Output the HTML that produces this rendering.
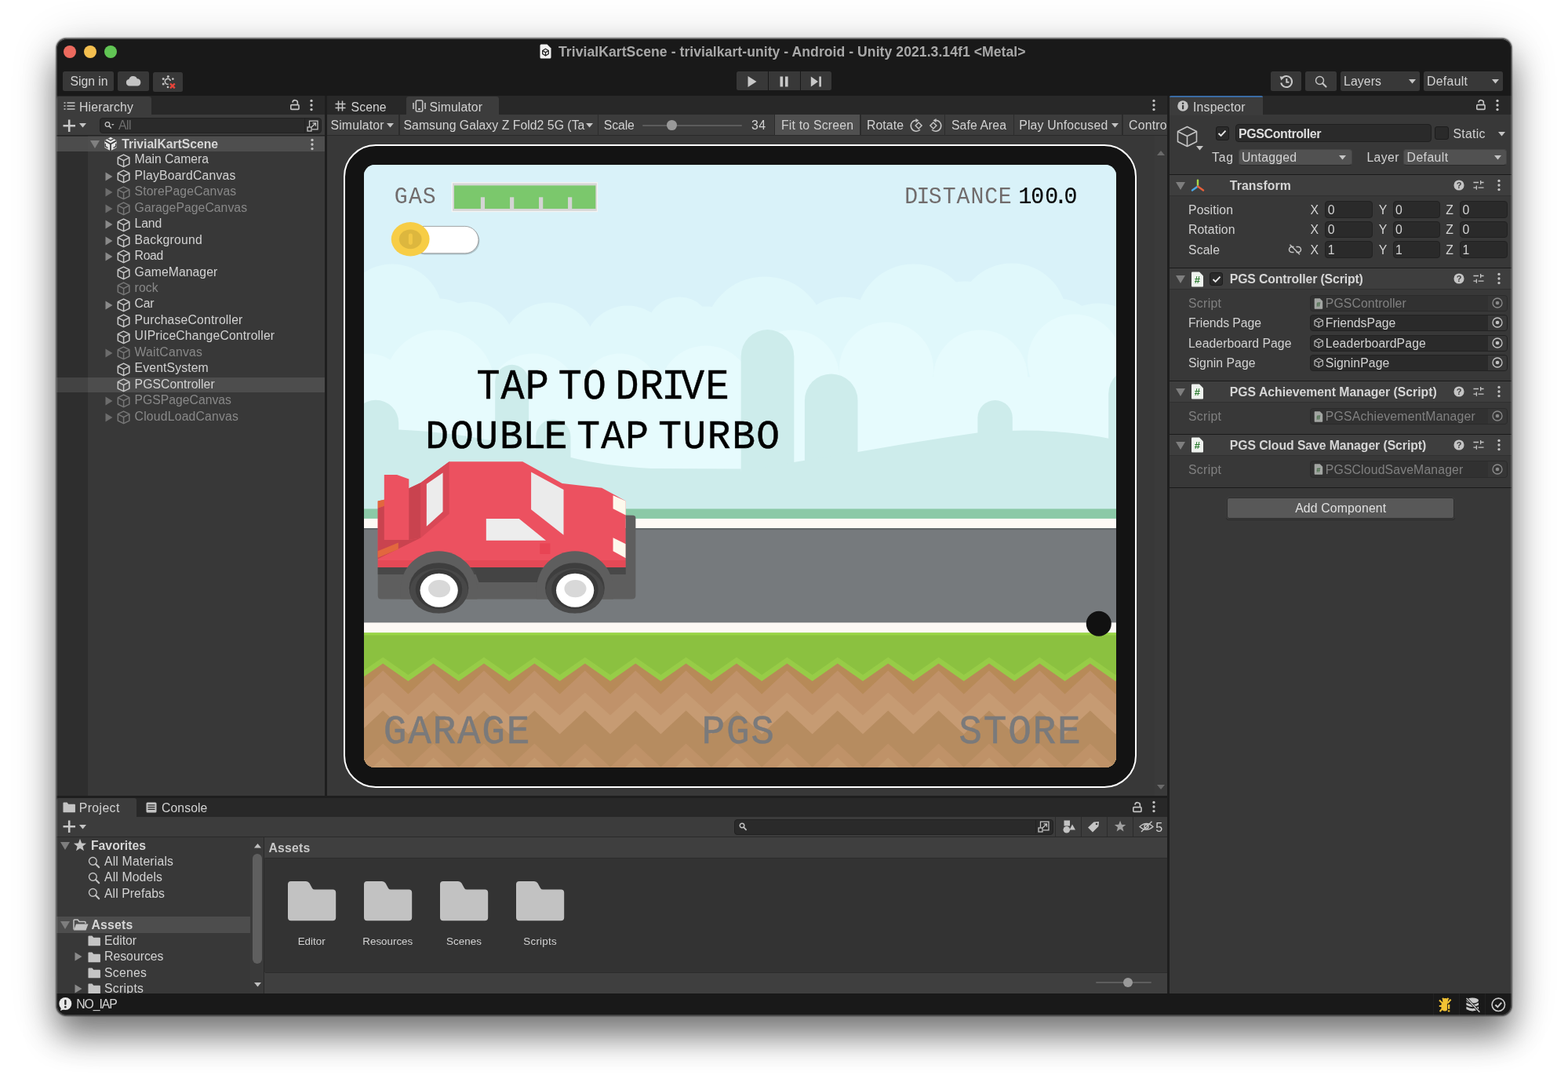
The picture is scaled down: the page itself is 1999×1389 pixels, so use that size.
<!DOCTYPE html>
<html><head><meta charset="utf-8"><title>Unity</title>
<style>
html,body{margin:0;padding:0}
body{width:1999px;height:1389px;background:#fff;position:relative;overflow:hidden;font-family:"Liberation Sans",sans-serif}
#sh{position:absolute;left:71.6px;top:48.8px;width:1855.8px;height:1245px;border-radius:13px;box-shadow:0 0 1.5px 0.4px rgba(0,0,0,.55),0 27px 42px rgba(0,0,0,.46),0 8px 60px rgba(0,0,0,.2)}
#w{will-change:transform;position:absolute;left:72px;top:49px;width:1855.4px;height:1244.8px;overflow:hidden;border-radius:13px;background:#383838}
#w div,#w svg,#w span{position:absolute}
#w svg{overflow:visible}
.t{white-space:nowrap;line-height:20px}
</style></head><body>
<div id="sh"></div>
<div id="w">
<div style="left:0px;top:0px;width:1855.6px;height:73.2px;background:#191919;"></div>
<div style="left:9.4px;top:9.4px;width:16px;height:16px;background:#ec6a5e;border-radius:50%;"></div>
<div style="left:35px;top:9.4px;width:16px;height:16px;background:#f4bf4f;border-radius:50%;"></div>
<div style="left:60.6px;top:9.4px;width:16px;height:16px;background:#61c554;border-radius:50%;"></div>
<svg style="left:616px;top:6.6px;" width="15" height="19" viewBox="0 0 15 19"><path d="M0.5 2 Q0.5 0.5 2 0.5 H9.5 L14.5 5.5 V17 Q14.5 18.5 13 18.5 H2 Q0.5 18.5 0.5 17 Z" fill="#f2f2f2"/><g fill="none" stroke="#222" stroke-width="1.3"><path d="M7.5 6.3 L11.3 8.5 V12.7 L7.5 14.9 L3.7 12.7 V8.5 Z"/><path d="M3.9 8.6 L7.5 10.7 L11.1 8.6 M7.5 10.7 V14.7"/></g></svg>
<span class="t" style="left:640px;top:7px;font-size:17.6px;color:#a8a8a8;letter-spacing:0.05px;font-weight:bold;">TrivialKartScene - trivialkart-unity - Android - Unity 2021.3.14f1 &lt;Metal&gt;</span>
<div style="left:8.4px;top:42.4px;width:64.6px;height:24.2px;background:#383838;border-radius:2.5px;"></div>
<span class="t" style="left:17.5px;top:45px;font-size:15.8px;color:#d2d2d2;letter-spacing:-0.05px;">Sign in</span>
<div style="left:78px;top:42.4px;width:39.6px;height:24.2px;background:#383838;border-radius:2.5px;"></div>
<svg style="left:88px;top:46.5px;" width="20" height="14" viewBox="0 0 20 14"><path d="M5 13.5 A4.3 4.3 0 0 1 4.3 5 A5.6 5.6 0 0 1 14.8 4.2 A4.7 4.7 0 0 1 15.6 13.5 Z" fill="#c4c4c4"/></svg>
<div style="left:122.8px;top:43.4px;width:38.2px;height:24.2px;background:#383838;border-radius:2.5px;"></div>
<svg style="left:132.5px;top:46px;" width="21" height="20" viewBox="0 0 21 20"><g fill="#c4c4c4"><circle cx="9.3" cy="2.6" r="1.5"/><circle cx="3.2" cy="5.6" r="1.5"/><circle cx="15.4" cy="5.6" r="1.3"/><circle cx="3.2" cy="12" r="1.5"/><circle cx="9" cy="16" r="1.3"/></g><path d="M12.4 8 A3.6 3.6 0 1 0 9.6 12.4" fill="none" stroke="#c4c4c4" stroke-width="1.6"/><path d="M12 11.5 L17.8 17.3 M17.8 11.5 L12 17.3" stroke="#e8443a" stroke-width="2.4"/></svg>
<div style="left:867.4px;top:42.4px;width:120.2px;height:24px;background:#383838;border-radius:2.5px;"></div>
<div style="left:907.2px;top:42.4px;width:1px;height:24px;background:#191919;"></div>
<div style="left:948.2px;top:42.4px;width:1px;height:24px;background:#191919;"></div>
<svg style="left:880px;top:46.5px;" width="14" height="16" viewBox="0 0 14 16"><path d="M1.5 1 L12.5 8 L1.5 15 Z" fill="#c8c8c8"/></svg>
<svg style="left:922px;top:47.5px;" width="12" height="14" viewBox="0 0 12 14"><rect x="0.5" y="0.5" width="3.6" height="13" fill="#c8c8c8"/><rect x="7" y="0.5" width="3.6" height="13" fill="#c8c8c8"/></svg>
<svg style="left:961px;top:47.5px;" width="15" height="14" viewBox="0 0 15 14"><path d="M0.8 0.5 L10 7 L0.8 13.5 Z" fill="#c8c8c8"/><rect x="11.3" y="0.5" width="2.6" height="13" fill="#c8c8c8"/></svg>
<div style="left:1547.6px;top:42.4px;width:39.4px;height:24.2px;background:#383838;border-radius:2.5px;"></div>
<svg style="left:1558.5px;top:45.5px;" width="18" height="18" viewBox="0 0 18 18"><g fill="none" stroke="#c8c8c8" stroke-width="2"><path d="M3.2 5.2 A7 7 0 1 1 2.2 10.5"/><path d="M9.3 5 V9.8 H12.4"/></g><path d="M0.6 2.2 L6.2 3 L2.3 7.6 Z" fill="#c4c4c4"/></svg>
<div style="left:1592px;top:42.4px;width:40px;height:24.2px;background:#383838;border-radius:2.5px;"></div>
<svg style="left:1604px;top:46.5px;" width="16" height="16" viewBox="0 0 16 16"><circle cx="6.5" cy="6.5" r="5" fill="none" stroke="#c4c4c4" stroke-width="1.4"/><path d="M10.2 10.2 L14.5 14.5" stroke="#c4c4c4" stroke-width="2.2" stroke-linecap="round"/></svg>
<div style="left:1637px;top:42.4px;width:101px;height:24.2px;background:#383838;border-radius:2.5px;"></div>
<span class="t" style="left:1641px;top:45px;font-size:15.8px;color:#d2d2d2;letter-spacing:0.12px;">Layers</span>
<svg style="left:1724px;top:52.05px;" width="9" height="5.5" viewBox="0 0 9 5.5"><path d="M0 0 H9 L4.5 5.5 Z" fill="#c4c4c4"/></svg>
<div style="left:1743px;top:42.4px;width:101px;height:24.2px;background:#383838;border-radius:2.5px;"></div>
<span class="t" style="left:1747px;top:45px;font-size:15.8px;color:#d2d2d2;letter-spacing:0.32px;">Default</span>
<svg style="left:1830.1px;top:52.05px;" width="9" height="5.5" viewBox="0 0 9 5.5"><path d="M0 0 H9 L4.5 5.5 Z" fill="#c4c4c4"/></svg>
<div style="left:0px;top:73.2px;width:341.6px;height:892.2px;background:#383838;"></div>
<div style="left:0px;top:73.2px;width:341.6px;height:24px;background:#282828;"></div>
<div style="left:0px;top:74px;width:120.8px;height:23.6px;background:#3c3c3c;border-radius:3px 3px 0 0;"></div>
<svg style="left:8.6px;top:80.2px;" width="14" height="11.4" viewBox="0 0 14 11.4"><g stroke="#c4c4c4" stroke-width="1.5"><path d="M4.5 2 H14.5 M4.5 6 H14.5 M4.5 10 H14.5"/><path d="M0.5 2 H2.5 M0.5 6 H2.5 M0.5 10 H2.5"/></g></svg>
<span class="t" style="left:29px;top:78px;font-size:15.8px;color:#d2d2d2;letter-spacing:0.17px;">Hierarchy</span>
<svg style="left:297.7px;top:78.3px;" width="12" height="13" viewBox="0 0 12 13"><g fill="none" stroke="#c4c4c4" stroke-width="1.6"><rect x="0.8" y="6.6" width="10.2" height="5.8" rx="1"/><path d="M9.4 6.6 V4.2 A3.2 3.2 0 0 0 3 3.6"/></g></svg>
<svg style="left:323.3px;top:77px;" width="4" height="16" viewBox="0 0 4 16"><circle cx="2" cy="2.4" r="1.65" fill="#c4c4c4"/><circle cx="2" cy="8" r="1.65" fill="#c4c4c4"/><circle cx="2" cy="13.6" r="1.65" fill="#c4c4c4"/></svg>
<div style="left:0px;top:97.2px;width:341.6px;height:27px;background:#3c3c3c;"></div>
<div style="left:0px;top:123.4px;width:341.6px;height:1px;background:#232323;"></div>
<svg style="left:7.6px;top:102.5px;" width="17" height="17" viewBox="0 0 17 17"><path d="M8.2 0.5 V16 M0.5 8.2 H16" stroke="#c8c8c8" stroke-width="2.6" fill="none"/></svg>
<svg style="left:29.3px;top:108.25px;" width="9" height="5.5" viewBox="0 0 9 5.5"><path d="M0 0 H9 L4.5 5.5 Z" fill="#c4c4c4"/></svg>
<div style="left:55px;top:100.6px;width:282.6px;height:20.2px;background:#2a2a2a;border:1px solid #212121;border-radius:4px;box-sizing:border-box;"></div>
<svg style="left:60.5px;top:105px;" width="13" height="12" viewBox="0 0 13 12"><circle cx="4" cy="4.5" r="2.8" fill="none" stroke="#c4c4c4" stroke-width="1.3"/><path d="M6 6.6 L8.8 9.6" stroke="#c4c4c4" stroke-width="1.5"/><path d="M9 4 H12.6 L10.8 6 Z" fill="#c4c4c4"/></svg>
<span class="t" style="left:79px;top:101px;font-size:15.8px;color:#6e6e6e;letter-spacing:-0.53px;">All</span>
<div style="left:316px;top:101.6px;width:1px;height:18.2px;background:#212121;"></div>
<svg style="left:319px;top:103px;" width="16" height="16" viewBox="0 0 16 16"><g fill="none" stroke="#c4c4c4" stroke-width="1.3"><path d="M3.5 9.5 V2.2 H14 V12.8 H6.8"/><rect x="1" y="10" width="5" height="5"/><path d="M6.2 10 L11.4 4.8 M7.5 4.8 H11.4 V8.7"/></g></svg>
<div style="left:0px;top:124.4px;width:40.4px;height:841px;background:#2e2e2e;"></div>
<div style="left:0px;top:124.6px;width:341.6px;height:19.8px;background:#4e4e4e;"></div>
<div style="left:0px;top:124.6px;width:40.4px;height:19.8px;background:#4c4c4c;"></div>
<svg style="left:42.6px;top:129.8px;" width="12" height="10" viewBox="0 0 12 10"><path d="M0 0 H12 L6 10 Z" fill="#808080"/></svg>
<svg style="left:59.5px;top:125px;" width="18" height="19" viewBox="0 0 18 19"><path d="M9 0.8 L16.6 5 V14 L9 18.2 L1.4 14 V5 Z" fill="#e4e4e4"/><g stroke="#3a3a3a" stroke-width="1.8" fill="none"><path d="M9 9.5 V18 M9 9.5 L1.6 5.2 M9 9.5 L16.4 5.2"/><path d="M5.2 3 L9 5 L12.8 3 M2.2 9 L2.2 12.5 L5.5 14.5 M15.8 9 V12.5 L12.5 14.5" stroke-width="1.4"/></g></svg>
<span class="t" style="left:83.2px;top:125px;font-size:15.8px;color:#d6d6d6;letter-spacing:-0.06px;font-weight:bold;">TrivialKartScene</span>
<svg style="left:324.3px;top:127.2px;" width="4" height="16" viewBox="0 0 4 16"><circle cx="2" cy="2.4" r="1.65" fill="#c4c4c4"/><circle cx="2" cy="8" r="1.65" fill="#c4c4c4"/><circle cx="2" cy="13.6" r="1.65" fill="#c4c4c4"/></svg>
<svg style="left:77px;top:146.7px;" width="17.2" height="17.8" viewBox="0 0 18 20" preserveAspectRatio="none"><g fill="none" stroke="#c8c8c8" stroke-width="1.6" stroke-linejoin="round"><path d="M9 1.2 L16.6 5.3 V14.7 L9 18.8 L1.4 14.7 V5.3 Z"/><path d="M1.6 5.5 L9 9.6 L16.4 5.5 M9 9.6 V18.6"/></g></svg>
<span class="t" style="left:99.6px;top:144px;font-size:15.8px;color:#d2d2d2;letter-spacing:-0.03px;">Main Camera</span>
<svg style="left:62.1px;top:169.95px;" width="10" height="12" viewBox="0 0 10 12"><path d="M0.5 0.5 L9.5 6 L0.5 11.5 Z" fill="#8a8a8a"/></svg>
<svg style="left:77px;top:167.15px;" width="17.2" height="17.8" viewBox="0 0 18 20" preserveAspectRatio="none"><g fill="none" stroke="#c8c8c8" stroke-width="1.6" stroke-linejoin="round"><path d="M9 1.2 L16.6 5.3 V14.7 L9 18.8 L1.4 14.7 V5.3 Z"/><path d="M1.6 5.5 L9 9.6 L16.4 5.5 M9 9.6 V18.6"/></g></svg>
<span class="t" style="left:99.6px;top:165px;font-size:15.8px;color:#d2d2d2;letter-spacing:0.17px;">PlayBoardCanvas</span>
<svg style="left:62.1px;top:190.4px;" width="10" height="12" viewBox="0 0 10 12"><path d="M0.5 0.5 L9.5 6 L0.5 11.5 Z" fill="#6c6c6c"/></svg>
<svg style="left:77px;top:187.6px;" width="17.2" height="17.8" viewBox="0 0 18 20" preserveAspectRatio="none"><g fill="none" stroke="#777" stroke-width="1.6" stroke-linejoin="round"><path d="M9 1.2 L16.6 5.3 V14.7 L9 18.8 L1.4 14.7 V5.3 Z"/><path d="M1.6 5.5 L9 9.6 L16.4 5.5 M9 9.6 V18.6"/></g></svg>
<span class="t" style="left:99.6px;top:185px;font-size:15.8px;color:#888;letter-spacing:0.1px;">StorePageCanvas</span>
<svg style="left:62.1px;top:210.85px;" width="10" height="12" viewBox="0 0 10 12"><path d="M0.5 0.5 L9.5 6 L0.5 11.5 Z" fill="#6c6c6c"/></svg>
<svg style="left:77px;top:208.05px;" width="17.2" height="17.8" viewBox="0 0 18 20" preserveAspectRatio="none"><g fill="none" stroke="#777" stroke-width="1.6" stroke-linejoin="round"><path d="M9 1.2 L16.6 5.3 V14.7 L9 18.8 L1.4 14.7 V5.3 Z"/><path d="M1.6 5.5 L9 9.6 L16.4 5.5 M9 9.6 V18.6"/></g></svg>
<span class="t" style="left:99.6px;top:206px;font-size:15.8px;color:#888;letter-spacing:0.02px;">GaragePageCanvas</span>
<svg style="left:62.1px;top:231.3px;" width="10" height="12" viewBox="0 0 10 12"><path d="M0.5 0.5 L9.5 6 L0.5 11.5 Z" fill="#8a8a8a"/></svg>
<svg style="left:77px;top:228.5px;" width="17.2" height="17.8" viewBox="0 0 18 20" preserveAspectRatio="none"><g fill="none" stroke="#c8c8c8" stroke-width="1.6" stroke-linejoin="round"><path d="M9 1.2 L16.6 5.3 V14.7 L9 18.8 L1.4 14.7 V5.3 Z"/><path d="M1.6 5.5 L9 9.6 L16.4 5.5 M9 9.6 V18.6"/></g></svg>
<span class="t" style="left:99.6px;top:226px;font-size:15.8px;color:#d2d2d2;letter-spacing:-0.18px;">Land</span>
<svg style="left:62.1px;top:251.75px;" width="10" height="12" viewBox="0 0 10 12"><path d="M0.5 0.5 L9.5 6 L0.5 11.5 Z" fill="#8a8a8a"/></svg>
<svg style="left:77px;top:248.95px;" width="17.2" height="17.8" viewBox="0 0 18 20" preserveAspectRatio="none"><g fill="none" stroke="#c8c8c8" stroke-width="1.6" stroke-linejoin="round"><path d="M9 1.2 L16.6 5.3 V14.7 L9 18.8 L1.4 14.7 V5.3 Z"/><path d="M1.6 5.5 L9 9.6 L16.4 5.5 M9 9.6 V18.6"/></g></svg>
<span class="t" style="left:99.6px;top:247px;font-size:15.8px;color:#d2d2d2;letter-spacing:0.22px;">Background</span>
<svg style="left:62.1px;top:272.2px;" width="10" height="12" viewBox="0 0 10 12"><path d="M0.5 0.5 L9.5 6 L0.5 11.5 Z" fill="#8a8a8a"/></svg>
<svg style="left:77px;top:269.4px;" width="17.2" height="17.8" viewBox="0 0 18 20" preserveAspectRatio="none"><g fill="none" stroke="#c8c8c8" stroke-width="1.6" stroke-linejoin="round"><path d="M9 1.2 L16.6 5.3 V14.7 L9 18.8 L1.4 14.7 V5.3 Z"/><path d="M1.6 5.5 L9 9.6 L16.4 5.5 M9 9.6 V18.6"/></g></svg>
<span class="t" style="left:99.6px;top:267px;font-size:15.8px;color:#d2d2d2;letter-spacing:-0.36px;">Road</span>
<svg style="left:77px;top:289.85px;" width="17.2" height="17.8" viewBox="0 0 18 20" preserveAspectRatio="none"><g fill="none" stroke="#c8c8c8" stroke-width="1.6" stroke-linejoin="round"><path d="M9 1.2 L16.6 5.3 V14.7 L9 18.8 L1.4 14.7 V5.3 Z"/><path d="M1.6 5.5 L9 9.6 L16.4 5.5 M9 9.6 V18.6"/></g></svg>
<span class="t" style="left:99.6px;top:288px;font-size:15.8px;color:#d2d2d2;letter-spacing:0.03px;">GameManager</span>
<svg style="left:77px;top:310.3px;" width="17.2" height="17.8" viewBox="0 0 18 20" preserveAspectRatio="none"><g fill="none" stroke="#777" stroke-width="1.6" stroke-linejoin="round"><path d="M9 1.2 L16.6 5.3 V14.7 L9 18.8 L1.4 14.7 V5.3 Z"/><path d="M1.6 5.5 L9 9.6 L16.4 5.5 M9 9.6 V18.6"/></g></svg>
<span class="t" style="left:99.6px;top:308px;font-size:15.8px;color:#888;letter-spacing:0.05px;">rock</span>
<svg style="left:62.1px;top:333.55px;" width="10" height="12" viewBox="0 0 10 12"><path d="M0.5 0.5 L9.5 6 L0.5 11.5 Z" fill="#8a8a8a"/></svg>
<svg style="left:77px;top:330.75px;" width="17.2" height="17.8" viewBox="0 0 18 20" preserveAspectRatio="none"><g fill="none" stroke="#c8c8c8" stroke-width="1.6" stroke-linejoin="round"><path d="M9 1.2 L16.6 5.3 V14.7 L9 18.8 L1.4 14.7 V5.3 Z"/><path d="M1.6 5.5 L9 9.6 L16.4 5.5 M9 9.6 V18.6"/></g></svg>
<span class="t" style="left:99.6px;top:328px;font-size:15.8px;color:#d2d2d2;letter-spacing:-0.23px;">Car</span>
<svg style="left:77px;top:351.2px;" width="17.2" height="17.8" viewBox="0 0 18 20" preserveAspectRatio="none"><g fill="none" stroke="#c8c8c8" stroke-width="1.6" stroke-linejoin="round"><path d="M9 1.2 L16.6 5.3 V14.7 L9 18.8 L1.4 14.7 V5.3 Z"/><path d="M1.6 5.5 L9 9.6 L16.4 5.5 M9 9.6 V18.6"/></g></svg>
<span class="t" style="left:99.6px;top:349px;font-size:15.8px;color:#d2d2d2;letter-spacing:0.15px;">PurchaseController</span>
<svg style="left:77px;top:371.65px;" width="17.2" height="17.8" viewBox="0 0 18 20" preserveAspectRatio="none"><g fill="none" stroke="#c8c8c8" stroke-width="1.6" stroke-linejoin="round"><path d="M9 1.2 L16.6 5.3 V14.7 L9 18.8 L1.4 14.7 V5.3 Z"/><path d="M1.6 5.5 L9 9.6 L16.4 5.5 M9 9.6 V18.6"/></g></svg>
<span class="t" style="left:99.6px;top:369px;font-size:15.8px;color:#d2d2d2;letter-spacing:0.13px;">UIPriceChangeController</span>
<svg style="left:62.1px;top:394.9px;" width="10" height="12" viewBox="0 0 10 12"><path d="M0.5 0.5 L9.5 6 L0.5 11.5 Z" fill="#6c6c6c"/></svg>
<svg style="left:77px;top:392.1px;" width="17.2" height="17.8" viewBox="0 0 18 20" preserveAspectRatio="none"><g fill="none" stroke="#777" stroke-width="1.6" stroke-linejoin="round"><path d="M9 1.2 L16.6 5.3 V14.7 L9 18.8 L1.4 14.7 V5.3 Z"/><path d="M1.6 5.5 L9 9.6 L16.4 5.5 M9 9.6 V18.6"/></g></svg>
<span class="t" style="left:99.6px;top:390px;font-size:15.8px;color:#888;letter-spacing:0.19px;">WaitCanvas</span>
<svg style="left:77px;top:412.55px;" width="17.2" height="17.8" viewBox="0 0 18 20" preserveAspectRatio="none"><g fill="none" stroke="#c8c8c8" stroke-width="1.6" stroke-linejoin="round"><path d="M9 1.2 L16.6 5.3 V14.7 L9 18.8 L1.4 14.7 V5.3 Z"/><path d="M1.6 5.5 L9 9.6 L16.4 5.5 M9 9.6 V18.6"/></g></svg>
<span class="t" style="left:99.6px;top:410px;font-size:15.8px;color:#d2d2d2;letter-spacing:0.11px;">EventSystem</span>
<div style="left:0px;top:431.5px;width:341.8px;height:19.9px;background:#4d4d4d;"></div>
<div style="left:0px;top:431.5px;width:40.4px;height:19.9px;background:#434343;"></div>
<svg style="left:77px;top:433px;" width="17.2" height="17.8" viewBox="0 0 18 20" preserveAspectRatio="none"><g fill="none" stroke="#c8c8c8" stroke-width="1.6" stroke-linejoin="round"><path d="M9 1.2 L16.6 5.3 V14.7 L9 18.8 L1.4 14.7 V5.3 Z"/><path d="M1.6 5.5 L9 9.6 L16.4 5.5 M9 9.6 V18.6"/></g></svg>
<span class="t" style="left:99.6px;top:431px;font-size:15.8px;color:#d2d2d2;letter-spacing:0.02px;">PGSController</span>
<svg style="left:62.1px;top:456.25px;" width="10" height="12" viewBox="0 0 10 12"><path d="M0.5 0.5 L9.5 6 L0.5 11.5 Z" fill="#6c6c6c"/></svg>
<svg style="left:77px;top:453.45px;" width="17.2" height="17.8" viewBox="0 0 18 20" preserveAspectRatio="none"><g fill="none" stroke="#777" stroke-width="1.6" stroke-linejoin="round"><path d="M9 1.2 L16.6 5.3 V14.7 L9 18.8 L1.4 14.7 V5.3 Z"/><path d="M1.6 5.5 L9 9.6 L16.4 5.5 M9 9.6 V18.6"/></g></svg>
<span class="t" style="left:99.6px;top:451px;font-size:15.8px;color:#888;letter-spacing:-0.04px;">PGSPageCanvas</span>
<svg style="left:62.1px;top:476.7px;" width="10" height="12" viewBox="0 0 10 12"><path d="M0.5 0.5 L9.5 6 L0.5 11.5 Z" fill="#6c6c6c"/></svg>
<svg style="left:77px;top:473.9px;" width="17.2" height="17.8" viewBox="0 0 18 20" preserveAspectRatio="none"><g fill="none" stroke="#777" stroke-width="1.6" stroke-linejoin="round"><path d="M9 1.2 L16.6 5.3 V14.7 L9 18.8 L1.4 14.7 V5.3 Z"/><path d="M1.6 5.5 L9 9.6 L16.4 5.5 M9 9.6 V18.6"/></g></svg>
<span class="t" style="left:99.6px;top:472px;font-size:15.8px;color:#888;letter-spacing:0.17px;">CloudLoadCanvas</span>
<div style="left:341.6px;top:73.2px;width:3px;height:1143.8px;background:#1e1e1e;"></div>
<div style="left:344.6px;top:73.2px;width:1071.4px;height:892.2px;background:#383838;"></div>
<div style="left:344.6px;top:73.2px;width:1071.4px;height:24px;background:#282828;"></div>
<div style="left:445.6px;top:74px;width:118.4px;height:23.6px;background:#3c3c3c;border-radius:3px 3px 0 0;"></div>
<svg style="left:354.5px;top:79px;" width="14" height="14" viewBox="0 0 14 14"><g stroke="#c4c4c4" stroke-width="1.5"><path d="M4.5 0.5 V13.5 M9.5 0.5 V13.5 M0.5 4.5 H13.5 M0.5 9.5 H13.5"/></g></svg>
<span class="t" style="left:375.6px;top:78px;font-size:15.8px;color:#d2d2d2;letter-spacing:0.05px;">Scene</span>
<svg style="left:453.5px;top:78px;" width="17" height="16" viewBox="0 0 17 16"><g fill="none" stroke="#c4c4c4" stroke-width="1.6"><rect x="4.3" y="1" width="8.4" height="14" rx="1.5"/><path d="M1 4 V12 M16 4 V12"/></g><rect x="7" y="11" width="3" height="2" fill="#c4c4c4"/></svg>
<span class="t" style="left:475.4px;top:78px;font-size:15.8px;color:#d2d2d2;letter-spacing:0.1px;">Simulator</span>
<svg style="left:1397.4px;top:77px;" width="4" height="16" viewBox="0 0 4 16"><circle cx="2" cy="2.4" r="1.65" fill="#c4c4c4"/><circle cx="2" cy="8" r="1.65" fill="#c4c4c4"/><circle cx="2" cy="13.6" r="1.65" fill="#c4c4c4"/></svg>
<div style="left:344.6px;top:97.2px;width:1071.4px;height:26.4px;background:#3c3c3c;"></div>
<div style="left:344.6px;top:123.4px;width:1071.4px;height:1px;background:#2a2a2a;"></div>
<span class="t" style="left:349.5px;top:101px;font-size:15.8px;color:#d2d2d2;letter-spacing:0.16px;">Simulator</span>
<svg style="left:420.5px;top:108.25px;" width="9" height="5.5" viewBox="0 0 9 5.5"><path d="M0 0 H9 L4.5 5.5 Z" fill="#c4c4c4"/></svg>
<div style="left:436.4px;top:97.2px;width:1.2px;height:26.4px;background:#2c2c2c;"></div>
<div style="left:690.2px;top:97.2px;width:1.2px;height:26.4px;background:#2c2c2c;"></div>
<div style="left:915px;top:97.2px;width:1.2px;height:26.4px;background:#2c2c2c;"></div>
<div style="left:1024.4px;top:97.2px;width:1.2px;height:26.4px;background:#2c2c2c;"></div>
<div style="left:1131.8px;top:97.2px;width:1.2px;height:26.4px;background:#2c2c2c;"></div>
<div style="left:1219.6px;top:97.2px;width:1.2px;height:26.4px;background:#2c2c2c;"></div>
<div style="left:1358.4px;top:97.2px;width:1.2px;height:26.4px;background:#2c2c2c;"></div>
<span class="t" style="left:442.5px;top:101px;font-size:15.8px;color:#d2d2d2;letter-spacing:0.03px;">Samsung Galaxy Z Fold2 5G (Ta</span>
<svg style="left:675.1px;top:108.25px;" width="9" height="5.5" viewBox="0 0 9 5.5"><path d="M0 0 H9 L4.5 5.5 Z" fill="#c4c4c4"/></svg>
<span class="t" style="left:697.8px;top:101px;font-size:15.8px;color:#d2d2d2;letter-spacing:-0.13px;">Scale</span>
<div style="left:747.4px;top:109.8px;width:126.6px;height:1.8px;background:#5c5c5c;border-radius:1px;"></div>
<div style="left:778px;top:104.2px;width:12.8px;height:12.8px;background:#999;border-radius:50%;"></div>
<span class="t" style="left:886px;top:101px;font-size:15.8px;color:#d2d2d2;letter-spacing:0.42px;">34</span>
<div style="left:916.2px;top:97.2px;width:108.2px;height:26.2px;background:#505050;"></div>
<span class="t" style="left:924px;top:101px;font-size:15.8px;color:#d2d2d2;letter-spacing:0.2px;">Fit to Screen</span>
<span class="t" style="left:1033px;top:101px;font-size:15.8px;color:#d2d2d2;letter-spacing:0.09px;">Rotate</span>
<svg style="left:1087px;top:101.5px;" width="19" height="18" viewBox="0 0 19 18"><g fill="none" stroke="#c4c4c4" stroke-width="1.5"><path d="M9.5 2.2 A7 7 0 1 0 14 14.3"/><rect x="9.3" y="6.2" width="5.6" height="5.6" transform="rotate(45 12.1 9)"/></g><path d="M8.5 0 L12.5 2.6 L8.5 5.2 Z" fill="#c4c4c4"/></svg>
<svg style="left:1111px;top:101.5px;" width="19" height="18" viewBox="0 0 19 18"><g transform="translate(19 0) scale(-1 1)"><g fill="none" stroke="#c4c4c4" stroke-width="1.5"><path d="M9.5 2.2 A7 7 0 1 0 14 14.3"/><rect x="9.3" y="6.2" width="5.6" height="5.6" transform="rotate(45 12.1 9)"/></g><path d="M8.5 0 L12.5 2.6 L8.5 5.2 Z" fill="#c4c4c4"/></g></svg>
<span class="t" style="left:1141px;top:101px;font-size:15.8px;color:#d2d2d2;letter-spacing:0.08px;">Safe Area</span>
<span class="t" style="left:1227.2px;top:101px;font-size:15.8px;color:#d2d2d2;letter-spacing:0.18px;">Play Unfocused</span>
<svg style="left:1344.5px;top:108.25px;" width="9" height="5.5" viewBox="0 0 9 5.5"><path d="M0 0 H9 L4.5 5.5 Z" fill="#c4c4c4"/></svg>
<div style="left:1359.6px;top:97.2px;width:56.4px;height:26.2px;background:#3c3c3c;overflow:hidden;"></div>
<div style="left:1359.6px;top:97.2px;width:56.4px;height:26px;overflow:hidden"><span class="t" style="left:7.4px;top:3.4px;font-size:15.8px;letter-spacing:0.25px;color:#d2d2d2">Control Panel</span></div>
<div style="left:1400px;top:124.4px;width:16px;height:841px;background:#3a3a3a;"></div>
<svg style="left:1403px;top:142.5px;" width="10" height="6" viewBox="0 0 10 6"><path d="M0 6 H10 L5 0 Z" fill="#6a6a6a"/></svg>
<svg style="left:1403px;top:951px;" width="10" height="6" viewBox="0 0 10 6"><path d="M0 0 H10 L5 6 Z" fill="#6a6a6a"/></svg>
<div style="left:366px;top:134.8px;width:1011.4px;height:820px;background:#131313;border:2px solid #fff;border-radius:41px;box-sizing:border-box;"></div><div style="left:392px;top:160.6px;width:959px;height:768px;border-radius:14px;overflow:hidden;background:#d9f2f9"><svg style="left:0;top:0" width="959" height="768" viewBox="464 209.6 959 768"><rect x="464" y="209" width="960" height="770" fill="#d9f2f9"/><circle cx="500" cy="400" r="64" fill="#e0f8fb"/><circle cx="600" cy="440" r="56" fill="#e0f8fb"/><circle cx="700" cy="445" r="60" fill="#e0f8fb"/><circle cx="800" cy="445" r="56" fill="#e0f8fb"/><circle cx="866" cy="420" r="42" fill="#e0f8fb"/><circle cx="975" cy="430" r="78" fill="#e0f8fb"/><circle cx="1075" cy="440" r="62" fill="#e0f8fb"/><circle cx="1165" cy="410" r="74" fill="#e0f8fb"/><circle cx="1290" cy="405" r="70" fill="#e0f8fb"/><circle cx="1400" cy="450" r="64" fill="#e0f8fb"/><circle cx="560" cy="430" r="50" fill="#e0f8fb"/><circle cx="1230" cy="420" r="62" fill="#e0f8fb"/><circle cx="1350" cy="430" r="50" fill="#e0f8fb"/><circle cx="900" cy="450" r="60" fill="#e0f8fb"/><rect x="464" y="420" width="960" height="240" fill="#e0f8fb"/><circle cx="560" cy="490" r="70" fill="#e6fbfd"/><circle cx="470" cy="500" r="50" fill="#e6fbfd"/><circle cx="680" cy="510" r="60" fill="#e6fbfd"/><circle cx="790" cy="500" r="50" fill="#e6fbfd"/><circle cx="900" cy="500" r="60" fill="#e6fbfd"/><circle cx="1010" cy="480" r="60" fill="#e6fbfd"/><circle cx="1130" cy="470" r="60" fill="#e6fbfd"/><circle cx="1250" cy="480" r="60" fill="#e6fbfd"/><circle cx="1370" cy="460" r="60" fill="#e6fbfd"/><rect x="464" y="480" width="960" height="180" fill="#e6fbfd"/><path d="M450 650 V538.5 A29.1 29.1 0 0 1 508.2 538.5 V650 Z" fill="#cdeceb"/><path d="M631.2 650 V485.85 A21.45 21.45 0 0 1 674.1 485.85 V650 Z" fill="#cdeceb"/><path d="M683.2 650 V556.15 A22.15 22.15 0 0 1 727.5 556.15 V650 Z" fill="#cdeceb"/><path d="M944.7 650 V453.5 A33.8 33.8 0 0 1 1012.3 453.5 V650 Z" fill="#cdeceb"/><path d="M1025.9 650 V509.8 A33.8 33.8 0 0 1 1093.5 509.8 V650 Z" fill="#cdeceb"/><path d="M1246.4 650 V531.9 A22.2 22.2 0 0 1 1290.8 531.9 V650 Z" fill="#cdeceb"/><path d="M1413.2 650 V501.4 A33.4 33.4 0 0 1 1480 501.4 V650 Z" fill="#cdeceb"/><path d="M464 547 H508 Q560 549 622 560 T726 582 T830 596.6 L944.7 597 V600 L1012 588.6 L1093.5 575.5 Q1170 562 1246 551 Q1300 546 1350 550 T1424 561 V650 H464 Z" fill="#cdeceb"/><rect x="464" y="648" width="960" height="13" fill="#8bc9a7"/><rect x="464" y="660.5" width="960" height="12.4" fill="#fdf9f5"/><rect x="464" y="672.7" width="960" height="121" fill="#767a7d"/><rect x="464" y="672.7" width="960" height="2" fill="#62666a"/><rect x="464" y="793" width="960" height="13.2" fill="#fdf9f5"/><rect x="464" y="806" width="960" height="80" fill="#8bc140"/><rect x="464" y="806" width="960" height="3" fill="#9ad645"/><path d="M359.4 980 L359.4 837 L391.6 859.5 L423.8 837 L456 859.5 L488.2 837 L520.4 859.5 L552.6 837 L584.8 859.5 L617 837 L649.2 859.5 L681.4 837 L713.6 859.5 L745.8 837 L778 859.5 L810.2 837 L842.4 859.5 L874.6 837 L906.8 859.5 L939 837 L971.2 859.5 L1003.4 837 L1035.6 859.5 L1067.8 837 L1100 859.5 L1132.2 837 L1164.4 859.5 L1196.6 837 L1228.8 859.5 L1261 837 L1293.2 859.5 L1325.4 837 L1357.6 859.5 L1389.8 837 L1422 859.5 L1454.2 837 L1486.4 859.5 L1486.4 980 Z" fill="#97cc47"/><path d="M359.4 980 L359.4 845 L391.6 867.5 L423.8 845 L456 867.5 L488.2 845 L520.4 867.5 L552.6 845 L584.8 867.5 L617 845 L649.2 867.5 L681.4 845 L713.6 867.5 L745.8 845 L778 867.5 L810.2 845 L842.4 867.5 L874.6 845 L906.8 867.5 L939 845 L971.2 867.5 L1003.4 845 L1035.6 867.5 L1067.8 845 L1100 867.5 L1132.2 845 L1164.4 867.5 L1196.6 845 L1228.8 867.5 L1261 845 L1293.2 867.5 L1325.4 845 L1357.6 867.5 L1389.8 845 L1422 867.5 L1454.2 845 L1486.4 867.5 L1486.4 980 Z" fill="#b78a58"/><path d="M359.4 980 L359.4 854 L391.6 884 L423.8 854 L456 884 L488.2 854 L520.4 884 L552.6 854 L584.8 884 L617 854 L649.2 884 L681.4 854 L713.6 884 L745.8 854 L778 884 L810.2 854 L842.4 884 L874.6 854 L906.8 884 L939 854 L971.2 884 L1003.4 854 L1035.6 884 L1067.8 854 L1100 884 L1132.2 854 L1164.4 884 L1196.6 854 L1228.8 884 L1261 854 L1293.2 884 L1325.4 854 L1357.6 884 L1389.8 854 L1422 884 L1454.2 854 L1486.4 884 L1486.4 980 Z" fill="#c0926a"/><path d="M359.4 980 L359.4 882 L391.6 911 L423.8 882 L456 911 L488.2 882 L520.4 911 L552.6 882 L584.8 911 L617 882 L649.2 911 L681.4 882 L713.6 911 L745.8 882 L778 911 L810.2 882 L842.4 911 L874.6 882 L906.8 911 L939 882 L971.2 911 L1003.4 882 L1035.6 911 L1067.8 882 L1100 911 L1132.2 882 L1164.4 911 L1196.6 882 L1228.8 911 L1261 882 L1293.2 911 L1325.4 882 L1357.6 911 L1389.8 882 L1422 911 L1454.2 882 L1486.4 911 L1486.4 980 Z" fill="#c69b73"/><path d="M359.4 980 L359.4 905 L391.6 935 L423.8 905 L456 935 L488.2 905 L520.4 935 L552.6 905 L584.8 935 L617 905 L649.2 935 L681.4 905 L713.6 935 L745.8 905 L778 935 L810.2 905 L842.4 935 L874.6 905 L906.8 935 L939 905 L971.2 935 L1003.4 905 L1035.6 935 L1067.8 905 L1100 935 L1132.2 905 L1164.4 935 L1196.6 905 L1228.8 935 L1261 905 L1293.2 935 L1325.4 905 L1357.6 935 L1389.8 905 L1422 935 L1454.2 905 L1486.4 935 L1486.4 980 Z" fill="#b68c60"/><path d="M359.4 980 L359.4 947 L391.6 977 L423.8 947 L456 977 L488.2 947 L520.4 977 L552.6 947 L584.8 977 L617 947 L649.2 977 L681.4 947 L713.6 977 L745.8 947 L778 977 L810.2 947 L842.4 977 L874.6 947 L906.8 977 L939 947 L971.2 977 L1003.4 947 L1035.6 977 L1067.8 947 L1100 977 L1132.2 947 L1164.4 977 L1196.6 947 L1228.8 977 L1261 947 L1293.2 977 L1325.4 947 L1357.6 977 L1389.8 947 L1422 977 L1454.2 947 L1486.4 977 L1486.4 980 Z" fill="#bf9268"/><path d="M359.4 980 L359.4 965 L391.6 995 L423.8 965 L456 995 L488.2 965 L520.4 995 L552.6 965 L584.8 995 L617 965 L649.2 995 L681.4 965 L713.6 995 L745.8 965 L778 995 L810.2 965 L842.4 995 L874.6 965 L906.8 995 L939 965 L971.2 995 L1003.4 965 L1035.6 995 L1067.8 965 L1100 995 L1132.2 965 L1164.4 995 L1196.6 965 L1228.8 995 L1261 965 L1293.2 995 L1325.4 965 L1357.6 995 L1389.8 965 L1422 995 L1454.2 965 L1486.4 995 L1486.4 980 Z" fill="#c59b70"/><g transform="translate(470 575) scale(0.18009)"><path d="M570 72 H1090 L1370 225 L1650 258 L1730 300 L1820 350 V822 H65 V350 L110 340 V165 H200 L285 195 V260 L370 220 Z" fill="#ec5160"/><path d="M285 260 L370 220 V610 L285 625 Z" fill="#c9434f"/><path d="M370 220 L570 72 V440 L370 610 Z" fill="#d94856"/><path d="M65 400 L110 385 V625 L285 625 L370 610 L65 760 Z" fill="#c9434f"/><path d="M65 350 L110 340 V385 L65 400 Z" fill="#e2673e"/><path d="M65 705 L210 645 V690 L65 752 Z" fill="#e2673e"/><path d="M410 230 L525 150 V425 L410 530 Z" fill="#ececec"/><path d="M832 475 H1065 L1255 630 H832 Z" fill="#ededed"/><path d="M1150 145 L1380 270 V590 L1150 410 Z" fill="#ebebeb"/><path d="M1730 310 L1820 350 V450 L1730 405 Z" fill="#fdf8ec"/><path d="M1730 610 L1820 655 V755 L1730 705 Z" fill="#fdf8ec"/><rect x="1212" y="650" width="73" height="75" fill="#e84454"/><path d="M65 770 H1820 V822 H65 Z" fill="#e0434f" opacity="0.55"/><path d="M65 820 H1820 V450 L1875 452 Q1890 455 1890 470 V1020 Q1890 1045 1860 1045 H90 Q65 1045 65 1020 Z" fill="#5e5e5e"/><path d="M65 820 H1820 V870 H65 Z" fill="#484848"/><path d="M740 820 H1220 V925 H780 Z" fill="#444"/><path d="M225 1045 V975 A272 270 0 0 1 769 975 V1045 Z" fill="#5e5e5e"/><path d="M1188 1045 V975 A272 270 0 0 1 1732 975 V1045 Z" fill="#5e5e5e"/><ellipse cx="497" cy="965" rx="210" ry="178" fill="#3e3e3e"/><ellipse cx="497" cy="985" rx="205" ry="160" fill="#484848"/><ellipse cx="497" cy="975" rx="165" ry="140" fill="#3a3a3a"/><ellipse cx="498" cy="982" rx="134" ry="120" fill="#fff"/><ellipse cx="500" cy="970" rx="78" ry="62" fill="#d8d8d8"/><ellipse cx="1460" cy="965" rx="210" ry="178" fill="#3e3e3e"/><ellipse cx="1460" cy="985" rx="205" ry="160" fill="#484848"/><ellipse cx="1460" cy="975" rx="165" ry="140" fill="#3a3a3a"/><ellipse cx="1461" cy="982" rx="134" ry="120" fill="#fff"/><ellipse cx="1463" cy="970" rx="78" ry="62" fill="#d8d8d8"/></g><circle cx="1400.8" cy="794.4" r="16" fill="#111"/><text transform="scale(0.94 1)" x="543.85 563.17 582.16" y="258.9" text-anchor="middle" font-family="Liberation Mono,monospace" font-size="29.93" fill="#716c6c" stroke="#716c6c" stroke-width="0">GAS</text><rect x="575.7" y="231.6" width="186.4" height="38.2" fill="#f4f4f4"/><rect x="577" y="233" width="183.8" height="35.4" fill="#d6d6d6"/><rect x="579" y="236" width="180.3" height="29.6" fill="#7bc86c"/><rect x="612.85" y="250.9" width="5.2" height="14.8" fill="#d4d4d4"/><rect x="650.05" y="250.9" width="5.2" height="14.8" fill="#d4d4d4"/><rect x="687.05" y="250.9" width="5.2" height="14.8" fill="#d4d4d4"/><rect x="724.05" y="250.9" width="5.2" height="14.8" fill="#d4d4d4"/><rect x="524" y="289.4" width="87.4" height="34.6" rx="17.3" fill="#8a9aa0" opacity="0.5"/><rect x="523" y="288" width="87" height="34.4" rx="17.2" fill="#fff" stroke="#8e8e8e" stroke-width="0.8"/><ellipse cx="523.2" cy="304.4" rx="24.4" ry="21.7" fill="#f7cd46"/><ellipse cx="523.2" cy="304.4" rx="14.4" ry="12.4" fill="#ddb73e"/><rect x="520.9" y="297" width="5" height="14.6" rx="2.4" fill="#f2c846"/><text transform="scale(0.94 1)" x="1235.93 1251.94 1268.29 1287.53 1306.26 1325.42 1344.33 1363.06" y="258.9" text-anchor="middle" font-family="Liberation Mono,monospace" font-size="29.93" fill="#716c6c" stroke="#716c6c" stroke-width="0">DISTANCE</text><text transform="scale(0.94 1)" x="1390.31 1407.17 1426.24 1438.84 1451.95" y="258.9" text-anchor="middle" font-family="Liberation Mono,monospace" font-size="29.93" fill="#080808" stroke="#080808" stroke-width="0.2">100.0</text><text transform="scale(0.94 1)" x="662.18 695.38 728.59 733.59 773.3 806.25 811.25 850.7 883.9 913.02 939.34 972.8" y="508" text-anchor="middle" font-family="Liberation Mono,monospace" font-size="53.28" fill="#000" stroke="#000" stroke-width="0.5">TAP TO DRIVE</text><text transform="scale(0.94 1)" x="592.7 626.41 659.62 693.34 724.51 753.88 758.88 798.07 831.03 863.98 868.98 908.68 941.89 975.1 1008.56 1041.51" y="571" text-anchor="middle" font-family="Liberation Mono,monospace" font-size="52.7" fill="#000" stroke="#000" stroke-width="0.5">DOUBLE TAP TURBO</text><text transform="scale(0.94 1)" x="535.74 569.15 602.55 635.96 669.36 702.77" y="946.8" text-anchor="middle" font-family="Liberation Mono,monospace" font-size="52.7" fill="#7a7a7b" stroke="#7a7a7b" stroke-width="0.5">GARAGE</text><text transform="scale(0.94 1)" x="967.45 1000.85 1034.26" y="946.8" text-anchor="middle" font-family="Liberation Mono,monospace" font-size="52.7" fill="#7a7a7b" stroke="#7a7a7b" stroke-width="0.5">PGS</text><text transform="scale(0.94 1)" x="1316.17 1349.57 1382.98 1416.38 1449.79" y="946.8" text-anchor="middle" font-family="Liberation Mono,monospace" font-size="52.7" fill="#7a7a7b" stroke="#7a7a7b" stroke-width="0.5">STORE</text></svg></div>
<div style="left:344.6px;top:965.4px;width:1071.4px;height:2.6px;background:#1e1e1e;"></div>
<div style="left:0px;top:965.4px;width:341.6px;height:2.6px;background:#1e1e1e;"></div>
<div style="left:1416px;top:73.2px;width:2.6px;height:1143.8px;background:#1e1e1e;"></div>
<div style="left:1418.6px;top:73.2px;width:437px;height:1143.8px;background:#383838;"></div>
<div style="left:1418.6px;top:73.2px;width:437px;height:24.2px;background:#282828;"></div>
<div style="left:1418.6px;top:73.2px;width:119.4px;height:24.4px;background:#3c3c3c;border-radius:3px 3px 0 0;"></div>
<div style="left:1418.6px;top:73.4px;width:119.4px;height:1.8px;background:#3a6ca4;border-radius:3px 3px 0 0;"></div>
<svg style="left:1429px;top:78.5px;" width="14" height="14" viewBox="0 0 14 14"><circle cx="7" cy="7" r="6.8" fill="#c4c4c4"/><rect x="6" y="6" width="2.2" height="5.2" fill="#3c3c3c"/><circle cx="7.1" cy="3.7" r="1.3" fill="#3c3c3c"/></svg>
<span class="t" style="left:1449px;top:78px;font-size:15.8px;color:#d2d2d2;letter-spacing:0.19px;">Inspector</span>
<svg style="left:1809.8px;top:78.3px;" width="12" height="13" viewBox="0 0 12 13"><g fill="none" stroke="#c4c4c4" stroke-width="1.6"><rect x="0.8" y="6.6" width="10.2" height="5.8" rx="1"/><path d="M9.4 6.6 V4.2 A3.2 3.2 0 0 0 3 3.6"/></g></svg>
<svg style="left:1835.4px;top:77px;" width="4" height="16" viewBox="0 0 4 16"><circle cx="2" cy="2.4" r="1.65" fill="#c4c4c4"/><circle cx="2" cy="8" r="1.65" fill="#c4c4c4"/><circle cx="2" cy="13.6" r="1.65" fill="#c4c4c4"/></svg>
<svg style="left:1427.5px;top:110.5px;" width="27" height="28" viewBox="0 0 27 28"><g fill="none" stroke="#c4c4c4" stroke-width="1.6" stroke-linejoin="round"><path d="M13.5 1.5 L25.5 7.5 V20.5 L13.5 26.5 L1.5 20.5 V7.5 Z"/><path d="M1.8 7.7 L13.5 13.5 L25.2 7.7 M13.5 13.5 V26.2"/></g></svg>
<svg style="left:1452.5px;top:136.75px;" width="9" height="5.5" viewBox="0 0 9 5.5"><path d="M0 0 H9 L4.5 5.5 Z" fill="#c4c4c4"/></svg>
<div style="left:1477.6px;top:112.4px;width:17.6px;height:17.6px;background:#2a2a2a;border:1px solid #1c1c1c;border-radius:3px;box-sizing:border-box;"></div><svg style="left:1480.4px;top:116.2px;" width="12" height="10" viewBox="0 0 12 10"><path d="M1.5 5 L4.6 8 L10.5 1.6" fill="none" stroke="#e8e8e8" stroke-width="1.9"/></svg>
<div style="left:1503.4px;top:109.4px;width:249.6px;height:22.2px;background:#2a2a2a;border:1px solid #1f1f1f;border-radius:4px;box-sizing:border-box;"></div>
<span class="t" style="left:1507px;top:112px;font-size:16px;color:#dedede;letter-spacing:-0.4px;font-weight:bold;">PGSController</span>
<div style="left:1757.4px;top:112.2px;width:17.4px;height:17.2px;background:#2a2a2a;border:1px solid #1c1c1c;border-radius:3px;box-sizing:border-box;"></div>
<span class="t" style="left:1780.4px;top:112px;font-size:15.8px;color:#d2d2d2;letter-spacing:0.3px;">Static</span>
<svg style="left:1838px;top:118.65px;" width="9" height="5.5" viewBox="0 0 9 5.5"><path d="M0 0 H9 L4.5 5.5 Z" fill="#c4c4c4"/></svg>
<span class="t" style="left:1473px;top:142px;font-size:15.8px;color:#d2d2d2;letter-spacing:0.76px;">Tag</span>
<div style="left:1506.6px;top:141px;width:145px;height:21.2px;background:#515151;border:1px solid #444;border-bottom-color:#2a2a2a;border-radius:4px;box-sizing:border-box;"></div>
<span class="t" style="left:1511px;top:142px;font-size:15.8px;color:#d2d2d2;letter-spacing:0.21px;">Untagged</span>
<svg style="left:1635px;top:148.85px;" width="9" height="5.5" viewBox="0 0 9 5.5"><path d="M0 0 H9 L4.5 5.5 Z" fill="#c4c4c4"/></svg>
<span class="t" style="left:1670.4px;top:142px;font-size:15.8px;color:#d2d2d2;letter-spacing:0.37px;">Layer</span>
<div style="left:1717.4px;top:141px;width:131.8px;height:21.2px;background:#515151;border:1px solid #444;border-bottom-color:#2a2a2a;border-radius:4px;box-sizing:border-box;"></div>
<span class="t" style="left:1721.6px;top:142px;font-size:15.8px;color:#d2d2d2;letter-spacing:0.41px;">Default</span>
<svg style="left:1833.1px;top:148.85px;" width="9" height="5.5" viewBox="0 0 9 5.5"><path d="M0 0 H9 L4.5 5.5 Z" fill="#c4c4c4"/></svg>
<div style="left:1418.6px;top:173.4px;width:437px;height:27px;background:#3e3e3e;"></div><div style="left:1418.6px;top:173.4px;width:437px;height:1px;background:#1a1a1a;"></div><div style="left:1418.6px;top:199.8px;width:437px;height:1px;background:#303030;"></div><svg style="left:1426.5px;top:182.9px;" width="12" height="10" viewBox="0 0 12 10"><path d="M0 0 H12 L6 10 Z" fill="#7e7e7e"/></svg><svg style="left:1446px;top:178.9px;" width="18" height="17" viewBox="0 0 18 17"><g stroke-width="2.4" stroke-linecap="round" fill="none"><path d="M9 9.5 V1.8" stroke="#a8d84a"/><path d="M9 9.5 L2 14.5" stroke="#4aa8e8"/><path d="M9 9.5 L16 14.5" stroke="#e8603a"/></g></svg><span class="t" style="left:1495.8px;top:178px;font-size:15.8px;color:#d6d6d6;letter-spacing:0.09px;font-weight:bold;">Transform</span><svg style="left:1780.6px;top:180.4px;" width="14" height="14" viewBox="0 0 16 16"><circle cx="8" cy="8" r="7.5" fill="#c4c4c4"/><text x="8" y="12.3" text-anchor="middle" font-family="Liberation Sans,sans-serif" font-weight="bold" font-size="12.5" fill="#3e3e3e">?</text></svg><svg style="left:1806.3px;top:180.4px;" width="14" height="14" viewBox="0 0 16 16"><g stroke="#c4c4c4" stroke-width="1.5" fill="none"><path d="M0.5 4 H8 M11 4 H15.5 M11 1 V7 M0.5 11.5 H4.5 M7.5 11.5 H15.5 M5 8.5 V14.5"/></g></svg><svg style="left:1836.7px;top:179.4px;" width="4" height="16" viewBox="0 0 4 16"><circle cx="2" cy="2.4" r="1.65" fill="#c4c4c4"/><circle cx="2" cy="8" r="1.65" fill="#c4c4c4"/><circle cx="2" cy="13.6" r="1.65" fill="#c4c4c4"/></svg>
<span class="t" style="left:1443px;top:209px;font-size:15.8px;color:#d2d2d2;letter-spacing:0.11px;">Position</span>
<span class="t" style="left:1598.6px;top:209px;font-size:15.8px;color:#d2d2d2;letter-spacing:0.25px;">X</span>
<div style="left:1617.4px;top:207.1px;width:60.6px;height:21.8px;background:#2a2a2a;border:1px solid #212121;border-radius:4px;box-sizing:border-box;"></div><span class="t" style="left:1620.8px;top:209px;font-size:15.8px;color:#d2d2d2;letter-spacing:0.25px;">0</span>
<span class="t" style="left:1685.7px;top:209px;font-size:15.8px;color:#d2d2d2;letter-spacing:0.25px;">Y</span>
<div style="left:1703.6px;top:207.1px;width:60.8px;height:21.8px;background:#2a2a2a;border:1px solid #212121;border-radius:4px;box-sizing:border-box;"></div><span class="t" style="left:1707px;top:209px;font-size:15.8px;color:#d2d2d2;letter-spacing:0.25px;">0</span>
<span class="t" style="left:1771.2px;top:209px;font-size:15.8px;color:#d2d2d2;letter-spacing:0.25px;">Z</span>
<div style="left:1789px;top:207.1px;width:60.6px;height:21.8px;background:#2a2a2a;border:1px solid #212121;border-radius:4px;box-sizing:border-box;"></div><span class="t" style="left:1792.4px;top:209px;font-size:15.8px;color:#d2d2d2;letter-spacing:0.25px;">0</span>
<span class="t" style="left:1443px;top:234px;font-size:15.8px;color:#d2d2d2;letter-spacing:0.09px;">Rotation</span>
<span class="t" style="left:1598.6px;top:234px;font-size:15.8px;color:#d2d2d2;letter-spacing:0.25px;">X</span>
<div style="left:1617.4px;top:232.5px;width:60.6px;height:21.8px;background:#2a2a2a;border:1px solid #212121;border-radius:4px;box-sizing:border-box;"></div><span class="t" style="left:1620.8px;top:234px;font-size:15.8px;color:#d2d2d2;letter-spacing:0.25px;">0</span>
<span class="t" style="left:1685.7px;top:234px;font-size:15.8px;color:#d2d2d2;letter-spacing:0.25px;">Y</span>
<div style="left:1703.6px;top:232.5px;width:60.8px;height:21.8px;background:#2a2a2a;border:1px solid #212121;border-radius:4px;box-sizing:border-box;"></div><span class="t" style="left:1707px;top:234px;font-size:15.8px;color:#d2d2d2;letter-spacing:0.25px;">0</span>
<span class="t" style="left:1771.2px;top:234px;font-size:15.8px;color:#d2d2d2;letter-spacing:0.25px;">Z</span>
<div style="left:1789px;top:232.5px;width:60.6px;height:21.8px;background:#2a2a2a;border:1px solid #212121;border-radius:4px;box-sizing:border-box;"></div><span class="t" style="left:1792.4px;top:234px;font-size:15.8px;color:#d2d2d2;letter-spacing:0.25px;">0</span>
<span class="t" style="left:1443px;top:260px;font-size:15.8px;color:#d2d2d2;letter-spacing:0.12px;">Scale</span>
<span class="t" style="left:1598.6px;top:260px;font-size:15.8px;color:#d2d2d2;letter-spacing:0.25px;">X</span>
<div style="left:1617.4px;top:257.9px;width:60.6px;height:21.8px;background:#2a2a2a;border:1px solid #212121;border-radius:4px;box-sizing:border-box;"></div><span class="t" style="left:1620.8px;top:260px;font-size:15.8px;color:#d2d2d2;letter-spacing:0.25px;">1</span>
<span class="t" style="left:1685.7px;top:260px;font-size:15.8px;color:#d2d2d2;letter-spacing:0.25px;">Y</span>
<div style="left:1703.6px;top:257.9px;width:60.8px;height:21.8px;background:#2a2a2a;border:1px solid #212121;border-radius:4px;box-sizing:border-box;"></div><span class="t" style="left:1707px;top:260px;font-size:15.8px;color:#d2d2d2;letter-spacing:0.25px;">1</span>
<span class="t" style="left:1771.2px;top:260px;font-size:15.8px;color:#d2d2d2;letter-spacing:0.25px;">Z</span>
<div style="left:1789px;top:257.9px;width:60.6px;height:21.8px;background:#2a2a2a;border:1px solid #212121;border-radius:4px;box-sizing:border-box;"></div><span class="t" style="left:1792.4px;top:260px;font-size:15.8px;color:#d2d2d2;letter-spacing:0.25px;">1</span>
<svg style="left:1569.5px;top:262px;" width="18" height="14" viewBox="0 0 18 14"><g fill="none" stroke="#c4c4c4" stroke-width="1.5"><path d="M7.5 3.5 H5 A3.5 3.5 0 0 0 5 10.5 H7.5 M10.5 3.5 H13 A3.5 3.5 0 0 1 13 10.5 H10.5"/><path d="M2.5 0.8 L15 13.2"/></g></svg>
<div style="left:1418.6px;top:292.4px;width:437px;height:27px;background:#3e3e3e;"></div><div style="left:1418.6px;top:292.4px;width:437px;height:1px;background:#1a1a1a;"></div><div style="left:1418.6px;top:318.8px;width:437px;height:1px;background:#303030;"></div><svg style="left:1426.5px;top:301.9px;" width="12" height="10" viewBox="0 0 12 10"><path d="M0 0 H12 L6 10 Z" fill="#7e7e7e"/></svg><svg style="left:1445.9px;top:296.6px;" width="17" height="20" viewBox="0 0 17 20"><g opacity="1"><path d="M1 1.5 Q1 0.5 2 0.5 H11 L16 5.5 V18.5 Q16 19.5 15 19.5 H2 Q1 19.5 1 18.5 Z" fill="#eef2ee"/><text x="8.3" y="15.2" text-anchor="middle" font-family="Liberation Sans,sans-serif" font-weight="bold" font-size="13" fill="#2e7d32">#</text></g></svg><div style="left:1470px;top:297.8px;width:17.4px;height:17.4px;background:#2a2a2a;border:1px solid #1c1c1c;border-radius:3px;box-sizing:border-box;"></div><svg style="left:1472.7px;top:301.5px;" width="12" height="10" viewBox="0 0 12 10"><path d="M1.5 5 L4.6 8 L10.5 1.6" fill="none" stroke="#e8e8e8" stroke-width="1.9"/></svg><span class="t" style="left:1495.8px;top:297px;font-size:15.8px;color:#d6d6d6;letter-spacing:-0.13px;font-weight:bold;">PGS Controller (Script)</span><svg style="left:1780.6px;top:299.4px;" width="14" height="14" viewBox="0 0 16 16"><circle cx="8" cy="8" r="7.5" fill="#c4c4c4"/><text x="8" y="12.3" text-anchor="middle" font-family="Liberation Sans,sans-serif" font-weight="bold" font-size="12.5" fill="#3e3e3e">?</text></svg><svg style="left:1806.3px;top:299.4px;" width="14" height="14" viewBox="0 0 16 16"><g stroke="#c4c4c4" stroke-width="1.5" fill="none"><path d="M0.5 4 H8 M11 4 H15.5 M11 1 V7 M0.5 11.5 H4.5 M7.5 11.5 H15.5 M5 8.5 V14.5"/></g></svg><svg style="left:1836.7px;top:298.4px;" width="4" height="16" viewBox="0 0 4 16"><circle cx="2" cy="2.4" r="1.65" fill="#c4c4c4"/><circle cx="2" cy="8" r="1.65" fill="#c4c4c4"/><circle cx="2" cy="13.6" r="1.65" fill="#c4c4c4"/></svg>
<span class="t" style="left:1443px;top:328px;font-size:15.8px;color:#808080;letter-spacing:0.32px;">Script</span>
<div style="left:1597.8px;top:326.5px;width:251.8px;height:21.4px;background:#313131;border:1px solid #2b2b2b;border-radius:4px;box-sizing:border-box;"></div><div style="left:1825.4px;top:327.5px;width:23.2px;height:19.4px;background:#363636;border-radius:0 3px 3px 0;"></div><svg style="left:1602.65px;top:330.5px;" width="11.9" height="14" viewBox="0 0 17 20"><g opacity="0.6"><path d="M1 1.5 Q1 0.5 2 0.5 H11 L16 5.5 V18.5 Q16 19.5 15 19.5 H2 Q1 19.5 1 18.5 Z" fill="#eef2ee"/><text x="8.3" y="15.2" text-anchor="middle" font-family="Liberation Sans,sans-serif" font-weight="bold" font-size="13" fill="#2e7d32">#</text></g></svg><span class="t" style="left:1617.8px;top:328px;font-size:15.8px;color:#808080;letter-spacing:0.09px;">PGSController</span><svg style="left:1829.4px;top:328.9px;" width="16" height="16" viewBox="0 0 16 16"><circle cx="8" cy="8" r="6" fill="none" stroke="#8a8a8a" stroke-width="1.3"/><circle cx="8" cy="8" r="2.3" fill="#8a8a8a"/></svg>
<span class="t" style="left:1443px;top:353px;font-size:15.8px;color:#d2d2d2;letter-spacing:-0.09px;">Friends Page</span>
<div style="left:1597.8px;top:351.9px;width:251.8px;height:21.4px;background:#2a2a2a;border:1px solid #222;border-radius:4px;box-sizing:border-box;"></div><div style="left:1825.4px;top:352.9px;width:23.2px;height:19.4px;background:#383838;border-radius:0 3px 3px 0;"></div><svg style="left:1602.61px;top:356.29px;" width="12.38" height="12.82" viewBox="0 0 18 20" preserveAspectRatio="none"><g fill="none" stroke="#c4c4c4" stroke-width="1.6" stroke-linejoin="round"><path d="M9 1.2 L16.6 5.3 V14.7 L9 18.8 L1.4 14.7 V5.3 Z"/><path d="M1.6 5.5 L9 9.6 L16.4 5.5 M9 9.6 V18.6"/></g></svg><span class="t" style="left:1617.8px;top:353px;font-size:15.8px;color:#d2d2d2;letter-spacing:-0.01px;">FriendsPage</span><svg style="left:1829.4px;top:354.3px;" width="16" height="16" viewBox="0 0 16 16"><circle cx="8" cy="8" r="6" fill="none" stroke="#c4c4c4" stroke-width="1.3"/><circle cx="8" cy="8" r="2.3" fill="#c4c4c4"/></svg>
<span class="t" style="left:1443px;top:379px;font-size:15.8px;color:#d2d2d2;letter-spacing:0.04px;">Leaderboard Page</span>
<div style="left:1597.8px;top:377.6px;width:251.8px;height:21.4px;background:#2a2a2a;border:1px solid #222;border-radius:4px;box-sizing:border-box;"></div><div style="left:1825.4px;top:378.6px;width:23.2px;height:19.4px;background:#383838;border-radius:0 3px 3px 0;"></div><svg style="left:1602.61px;top:381.99px;" width="12.38" height="12.82" viewBox="0 0 18 20" preserveAspectRatio="none"><g fill="none" stroke="#c4c4c4" stroke-width="1.6" stroke-linejoin="round"><path d="M9 1.2 L16.6 5.3 V14.7 L9 18.8 L1.4 14.7 V5.3 Z"/><path d="M1.6 5.5 L9 9.6 L16.4 5.5 M9 9.6 V18.6"/></g></svg><span class="t" style="left:1617.8px;top:379px;font-size:15.8px;color:#d2d2d2;letter-spacing:0.11px;">LeaderboardPage</span><svg style="left:1829.4px;top:380px;" width="16" height="16" viewBox="0 0 16 16"><circle cx="8" cy="8" r="6" fill="none" stroke="#c4c4c4" stroke-width="1.3"/><circle cx="8" cy="8" r="2.3" fill="#c4c4c4"/></svg>
<span class="t" style="left:1443px;top:404px;font-size:15.8px;color:#d2d2d2;letter-spacing:0.03px;">Signin Page</span>
<div style="left:1597.8px;top:403px;width:251.8px;height:21.4px;background:#2a2a2a;border:1px solid #222;border-radius:4px;box-sizing:border-box;"></div><div style="left:1825.4px;top:404px;width:23.2px;height:19.4px;background:#383838;border-radius:0 3px 3px 0;"></div><svg style="left:1602.61px;top:407.39px;" width="12.38" height="12.82" viewBox="0 0 18 20" preserveAspectRatio="none"><g fill="none" stroke="#c4c4c4" stroke-width="1.6" stroke-linejoin="round"><path d="M9 1.2 L16.6 5.3 V14.7 L9 18.8 L1.4 14.7 V5.3 Z"/><path d="M1.6 5.5 L9 9.6 L16.4 5.5 M9 9.6 V18.6"/></g></svg><span class="t" style="left:1617.8px;top:404px;font-size:15.8px;color:#d2d2d2;letter-spacing:0.08px;">SigninPage</span><svg style="left:1829.4px;top:405.4px;" width="16" height="16" viewBox="0 0 16 16"><circle cx="8" cy="8" r="6" fill="none" stroke="#c4c4c4" stroke-width="1.3"/><circle cx="8" cy="8" r="2.3" fill="#c4c4c4"/></svg>
<div style="left:1418.6px;top:436.2px;width:437px;height:27px;background:#3e3e3e;"></div><div style="left:1418.6px;top:436.2px;width:437px;height:1px;background:#1a1a1a;"></div><div style="left:1418.6px;top:462.6px;width:437px;height:1px;background:#303030;"></div><svg style="left:1426.5px;top:445.7px;" width="12" height="10" viewBox="0 0 12 10"><path d="M0 0 H12 L6 10 Z" fill="#7e7e7e"/></svg><svg style="left:1445.9px;top:440.4px;" width="17" height="20" viewBox="0 0 17 20"><g opacity="1"><path d="M1 1.5 Q1 0.5 2 0.5 H11 L16 5.5 V18.5 Q16 19.5 15 19.5 H2 Q1 19.5 1 18.5 Z" fill="#eef2ee"/><text x="8.3" y="15.2" text-anchor="middle" font-family="Liberation Sans,sans-serif" font-weight="bold" font-size="13" fill="#2e7d32">#</text></g></svg><span class="t" style="left:1495.8px;top:441px;font-size:15.8px;color:#d6d6d6;letter-spacing:-0.02px;font-weight:bold;">PGS Achievement Manager (Script)</span><svg style="left:1780.6px;top:443.2px;" width="14" height="14" viewBox="0 0 16 16"><circle cx="8" cy="8" r="7.5" fill="#c4c4c4"/><text x="8" y="12.3" text-anchor="middle" font-family="Liberation Sans,sans-serif" font-weight="bold" font-size="12.5" fill="#3e3e3e">?</text></svg><svg style="left:1806.3px;top:443.2px;" width="14" height="14" viewBox="0 0 16 16"><g stroke="#c4c4c4" stroke-width="1.5" fill="none"><path d="M0.5 4 H8 M11 4 H15.5 M11 1 V7 M0.5 11.5 H4.5 M7.5 11.5 H15.5 M5 8.5 V14.5"/></g></svg><svg style="left:1836.7px;top:442.2px;" width="4" height="16" viewBox="0 0 4 16"><circle cx="2" cy="2.4" r="1.65" fill="#c4c4c4"/><circle cx="2" cy="8" r="1.65" fill="#c4c4c4"/><circle cx="2" cy="13.6" r="1.65" fill="#c4c4c4"/></svg>
<span class="t" style="left:1443px;top:472px;font-size:15.8px;color:#808080;letter-spacing:0.32px;">Script</span>
<div style="left:1597.8px;top:470.7px;width:251.8px;height:21.4px;background:#313131;border:1px solid #2b2b2b;border-radius:4px;box-sizing:border-box;"></div><div style="left:1825.4px;top:471.7px;width:23.2px;height:19.4px;background:#363636;border-radius:0 3px 3px 0;"></div><svg style="left:1602.65px;top:474.7px;" width="11.9" height="14" viewBox="0 0 17 20"><g opacity="0.6"><path d="M1 1.5 Q1 0.5 2 0.5 H11 L16 5.5 V18.5 Q16 19.5 15 19.5 H2 Q1 19.5 1 18.5 Z" fill="#eef2ee"/><text x="8.3" y="15.2" text-anchor="middle" font-family="Liberation Sans,sans-serif" font-weight="bold" font-size="13" fill="#2e7d32">#</text></g></svg><span class="t" style="left:1617.8px;top:472px;font-size:15.8px;color:#808080;letter-spacing:0.2px;">PGSAchievementManager</span><svg style="left:1829.4px;top:473.1px;" width="16" height="16" viewBox="0 0 16 16"><circle cx="8" cy="8" r="6" fill="none" stroke="#8a8a8a" stroke-width="1.3"/><circle cx="8" cy="8" r="2.3" fill="#8a8a8a"/></svg>
<div style="left:1418.6px;top:504.2px;width:437px;height:27px;background:#3e3e3e;"></div><div style="left:1418.6px;top:504.2px;width:437px;height:1px;background:#1a1a1a;"></div><div style="left:1418.6px;top:530.6px;width:437px;height:1px;background:#303030;"></div><svg style="left:1426.5px;top:513.7px;" width="12" height="10" viewBox="0 0 12 10"><path d="M0 0 H12 L6 10 Z" fill="#7e7e7e"/></svg><svg style="left:1445.9px;top:508.4px;" width="17" height="20" viewBox="0 0 17 20"><g opacity="1"><path d="M1 1.5 Q1 0.5 2 0.5 H11 L16 5.5 V18.5 Q16 19.5 15 19.5 H2 Q1 19.5 1 18.5 Z" fill="#eef2ee"/><text x="8.3" y="15.2" text-anchor="middle" font-family="Liberation Sans,sans-serif" font-weight="bold" font-size="13" fill="#2e7d32">#</text></g></svg><span class="t" style="left:1495.8px;top:509px;font-size:15.8px;color:#d6d6d6;letter-spacing:-0.08px;font-weight:bold;">PGS Cloud Save Manager (Script)</span><svg style="left:1780.6px;top:511.2px;" width="14" height="14" viewBox="0 0 16 16"><circle cx="8" cy="8" r="7.5" fill="#c4c4c4"/><text x="8" y="12.3" text-anchor="middle" font-family="Liberation Sans,sans-serif" font-weight="bold" font-size="12.5" fill="#3e3e3e">?</text></svg><svg style="left:1806.3px;top:511.2px;" width="14" height="14" viewBox="0 0 16 16"><g stroke="#c4c4c4" stroke-width="1.5" fill="none"><path d="M0.5 4 H8 M11 4 H15.5 M11 1 V7 M0.5 11.5 H4.5 M7.5 11.5 H15.5 M5 8.5 V14.5"/></g></svg><svg style="left:1836.7px;top:510.2px;" width="4" height="16" viewBox="0 0 4 16"><circle cx="2" cy="2.4" r="1.65" fill="#c4c4c4"/><circle cx="2" cy="8" r="1.65" fill="#c4c4c4"/><circle cx="2" cy="13.6" r="1.65" fill="#c4c4c4"/></svg>
<span class="t" style="left:1443px;top:540px;font-size:15.8px;color:#808080;letter-spacing:0.32px;">Script</span>
<div style="left:1597.8px;top:538.2px;width:251.8px;height:21.4px;background:#313131;border:1px solid #2b2b2b;border-radius:4px;box-sizing:border-box;"></div><div style="left:1825.4px;top:539.2px;width:23.2px;height:19.4px;background:#363636;border-radius:0 3px 3px 0;"></div><svg style="left:1602.65px;top:542.2px;" width="11.9" height="14" viewBox="0 0 17 20"><g opacity="0.6"><path d="M1 1.5 Q1 0.5 2 0.5 H11 L16 5.5 V18.5 Q16 19.5 15 19.5 H2 Q1 19.5 1 18.5 Z" fill="#eef2ee"/><text x="8.3" y="15.2" text-anchor="middle" font-family="Liberation Sans,sans-serif" font-weight="bold" font-size="13" fill="#2e7d32">#</text></g></svg><span class="t" style="left:1617.8px;top:540px;font-size:15.8px;color:#808080;letter-spacing:0.14px;">PGSCloudSaveManager</span><svg style="left:1829.4px;top:540.6px;" width="16" height="16" viewBox="0 0 16 16"><circle cx="8" cy="8" r="6" fill="none" stroke="#8a8a8a" stroke-width="1.3"/><circle cx="8" cy="8" r="2.3" fill="#8a8a8a"/></svg>
<div style="left:1418.6px;top:572px;width:437px;height:1.2px;background:#1a1a1a;"></div>
<div style="left:1491.4px;top:583.8px;width:291.6px;height:28.8px;background:#585858;border-radius:4px;box-shadow:0 0 0 1px #2e2e2e inset,0 1px 0 #2a2a2a;border:1px solid #3a3a3a;box-sizing:border-box;"></div>
<span class="t" style="left:1579.2px;top:589px;font-size:15.8px;color:#e0e0e0;letter-spacing:0.15px;">Add Component</span>
<div style="left:0px;top:968px;width:1416px;height:249px;background:#383838;"></div>
<div style="left:0px;top:968px;width:1416px;height:23.6px;background:#282828;"></div>
<div style="left:0px;top:968.4px;width:101.8px;height:23.6px;background:#3c3c3c;border-radius:3px 3px 0 0;"></div>
<svg style="left:7.8px;top:972.8px;" width="16.4" height="13.8" viewBox="0 0 18 15" preserveAspectRatio="none"><path d="M0.5 1.5 Q0.5 0.5 1.5 0.5 H6 L8 3 H16.5 Q17.5 3 17.5 4 V13.5 Q17.5 14.5 16.5 14.5 H1.5 Q0.5 14.5 0.5 13.5 Z" fill="#c4c4c4"/></svg>
<span class="t" style="left:28.8px;top:971px;font-size:15.8px;color:#d2d2d2;letter-spacing:0.39px;">Project</span>
<svg style="left:113.6px;top:972.5px;" width="14" height="14" viewBox="0 0 14 14"><rect x="0.5" y="0.5" width="13" height="13" rx="1.5" fill="#c4c4c4"/><path d="M2.5 3.8 H11.5 M2.5 6.6 H11.5 M2.5 9.4 H11.5" stroke="#2a2a2a" stroke-width="1.3"/></svg>
<span class="t" style="left:133.9px;top:971px;font-size:15.8px;color:#d2d2d2;letter-spacing:0.09px;">Console</span>
<svg style="left:1371.6px;top:972.8px;" width="12" height="13" viewBox="0 0 12 13"><g fill="none" stroke="#c4c4c4" stroke-width="1.6"><rect x="0.8" y="6.6" width="10.2" height="5.8" rx="1"/><path d="M9.4 6.6 V4.2 A3.2 3.2 0 0 0 3 3.6"/></g></svg>
<svg style="left:1397.4px;top:971px;" width="4" height="16" viewBox="0 0 4 16"><circle cx="2" cy="2.4" r="1.65" fill="#c4c4c4"/><circle cx="2" cy="8" r="1.65" fill="#c4c4c4"/><circle cx="2" cy="13.6" r="1.65" fill="#c4c4c4"/></svg>
<div style="left:0px;top:991.6px;width:1416px;height:26.2px;background:#3c3c3c;"></div>
<div style="left:0px;top:1017px;width:1416px;height:1.2px;background:#2a2a2a;"></div>
<svg style="left:7.6px;top:996px;" width="17" height="17" viewBox="0 0 17 17"><path d="M8.2 0.5 V16 M0.5 8.2 H16" stroke="#c8c8c8" stroke-width="2.6" fill="none"/></svg>
<svg style="left:29.3px;top:1001.85px;" width="9" height="5.5" viewBox="0 0 9 5.5"><path d="M0 0 H9 L4.5 5.5 Z" fill="#c4c4c4"/></svg>
<div style="left:864.4px;top:994.6px;width:406.2px;height:20.4px;background:#2a2a2a;border:1px solid #212121;border-radius:4px;box-sizing:border-box;"></div>
<svg style="left:870px;top:999px;" width="11" height="11" viewBox="0 0 11 11"><circle cx="4" cy="4" r="2.8" fill="none" stroke="#c4c4c4" stroke-width="1.4"/><path d="M6 6.2 L9.6 9.8" stroke="#c4c4c4" stroke-width="1.7"/></svg>
<div style="left:1248.4px;top:995.2px;width:1px;height:18.2px;background:#212121;"></div>
<svg style="left:1251.2px;top:996.4px;" width="16" height="16" viewBox="0 0 16 16"><g fill="none" stroke="#c4c4c4" stroke-width="1.3"><path d="M3.5 9.5 V2.2 H14 V12.8 H6.8"/><rect x="1" y="10" width="5" height="5"/><path d="M6.2 10 L11.4 4.8 M7.5 4.8 H11.4 V8.7"/></g></svg>
<div style="left:1273px;top:991.6px;width:1.2px;height:25.4px;background:#2c2c2c;"></div>
<div style="left:1306px;top:991.6px;width:1.2px;height:25.4px;background:#2c2c2c;"></div>
<div style="left:1339px;top:991.6px;width:1.2px;height:25.4px;background:#2c2c2c;"></div>
<div style="left:1372.2px;top:991.6px;width:1.2px;height:25.4px;background:#2c2c2c;"></div>
<svg style="left:1281.6px;top:995.6px;" width="17" height="17" viewBox="0 0 17 17"><rect x="2.5" y="0.5" width="7.5" height="7" fill="#c4c4c4"/><circle cx="5.8" cy="12.2" r="4.3" fill="#c4c4c4"/><path d="M13 5.5 L17 12.5 H9.5 Z" fill="#c4c4c4"/></svg>
<svg style="left:1314px;top:997px;" width="17" height="15" viewBox="0 0 17 15"><path d="M1 8.5 L8.5 1.5 L15 1 L14.5 7 L7 14.5 Z" fill="#c4c4c4"/><circle cx="12" cy="4" r="1.3" fill="#3c3c3c"/></svg>
<svg style="left:1348.33px;top:996.12px;" width="16.15" height="16.15" viewBox="0 0 17 17"><polygon points="8.50,0.80 10.50,6.05 16.11,6.33 11.73,9.85 13.20,15.27 8.50,12.20 3.80,15.27 5.27,9.85 0.89,6.33 6.50,6.05" fill="#a0a0a0"/></svg>
<svg style="left:1380.4px;top:997px;" width="19" height="15" viewBox="0 0 19 15"><g fill="none" stroke="#c4c4c4" stroke-width="1.4"><path d="M1 7.5 Q9.5 -0.5 18 7.5 Q9.5 15 1 7.5 Z"/><circle cx="9.5" cy="7.3" r="2.6"/><path d="M3 14 L16.5 0.8"/></g></svg>
<span class="t" style="left:1401.2px;top:996px;font-size:16px;color:#d2d2d2;letter-spacing:0.25px;">5</span>
<div style="left:0px;top:1017.8px;width:247.4px;height:199.2px;background:#383838;"></div>
<div style="left:247.4px;top:1017.8px;width:17.2px;height:199.2px;background:#3a3a3a;"></div>
<div style="left:250px;top:1039px;width:12.4px;height:140px;background:#5f5f5f;border-radius:6px;"></div>
<svg style="left:251.5px;top:1025.9px;" width="9" height="5.4" viewBox="0 0 9 5.4"><path d="M0 5.4 H9 L4.5 0 Z" fill="#c0c0c0"/></svg>
<svg style="left:251.5px;top:1203.4px;" width="9" height="5.4" viewBox="0 0 9 5.4"><path d="M0 0 H9 L4.5 5.4 Z" fill="#c0c0c0"/></svg>
<div style="left:263.8px;top:1017.8px;width:1.2px;height:199.2px;background:#2a2a2a;"></div>
<svg style="left:4.6px;top:1024px;" width="12" height="10" viewBox="0 0 12 10"><path d="M0 0 H12 L6 10 Z" fill="#7e7e7e"/></svg>
<svg style="left:20.99px;top:1018.99px;" width="18.02" height="18.02" viewBox="0 0 17 17"><polygon points="8.50,0.80 10.50,6.05 16.11,6.33 11.73,9.85 13.20,15.27 8.50,12.20 3.80,15.27 5.27,9.85 0.89,6.33 6.50,6.05" fill="#c4c4c4"/></svg>
<span class="t" style="left:44px;top:1019px;font-size:15.8px;color:#d6d6d6;letter-spacing:-0.03px;font-weight:bold;">Favorites</span>
<svg style="left:39.76px;top:1041.56px;" width="15.68" height="15.68" viewBox="0 0 16 16"><circle cx="6.5" cy="6.5" r="5" fill="none" stroke="#c4c4c4" stroke-width="1.4"/><path d="M10.2 10.2 L14.5 14.5" stroke="#c4c4c4" stroke-width="2.2" stroke-linecap="round"/></svg>
<span class="t" style="left:61px;top:1039px;font-size:15.8px;color:#d2d2d2;letter-spacing:0.16px;">All Materials</span>
<svg style="left:39.76px;top:1061.86px;" width="15.68" height="15.68" viewBox="0 0 16 16"><circle cx="6.5" cy="6.5" r="5" fill="none" stroke="#c4c4c4" stroke-width="1.4"/><path d="M10.2 10.2 L14.5 14.5" stroke="#c4c4c4" stroke-width="2.2" stroke-linecap="round"/></svg>
<span class="t" style="left:61px;top:1059px;font-size:15.8px;color:#d2d2d2;letter-spacing:0.12px;">All Models</span>
<svg style="left:39.76px;top:1082.16px;" width="15.68" height="15.68" viewBox="0 0 16 16"><circle cx="6.5" cy="6.5" r="5" fill="none" stroke="#c4c4c4" stroke-width="1.4"/><path d="M10.2 10.2 L14.5 14.5" stroke="#c4c4c4" stroke-width="2.2" stroke-linecap="round"/></svg>
<span class="t" style="left:61px;top:1080px;font-size:15.8px;color:#d2d2d2;letter-spacing:0.06px;">All Prefabs</span>
<div style="left:0px;top:1119.2px;width:247.4px;height:20.4px;background:#4d4d4d;"></div>
<svg style="left:4.6px;top:1125px;" width="12" height="10" viewBox="0 0 12 10"><path d="M0 0 H12 L6 10 Z" fill="#7e7e7e"/></svg>
<svg style="left:20.6px;top:1122.1px;" width="20" height="15" viewBox="0 0 20 15"><path d="M1 13.5 V2 Q1 1 2 1 H6 L8 3.5 H15 Q16 3.5 16 4.5 V6" fill="none" stroke="#c4c4c4" stroke-width="1.5"/><path d="M1 14.5 L4 6.5 H19.5 L16.5 14.5 Z" fill="#c4c4c4"/></svg>
<span class="t" style="left:44.4px;top:1120px;font-size:15.8px;color:#d6d6d6;letter-spacing:0.24px;font-weight:bold;">Assets</span>
<svg style="left:39.8px;top:1143.2px;" width="16.4" height="13.8" viewBox="0 0 18 15" preserveAspectRatio="none"><path d="M0.5 1.5 Q0.5 0.5 1.5 0.5 H6 L8 3 H16.5 Q17.5 3 17.5 4 V13.5 Q17.5 14.5 16.5 14.5 H1.5 Q0.5 14.5 0.5 13.5 Z" fill="#c4c4c4"/></svg>
<span class="t" style="left:61px;top:1140px;font-size:15.8px;color:#d2d2d2;letter-spacing:-0.06px;">Editor</span>
<svg style="left:23.4px;top:1164.4px;" width="10" height="12" viewBox="0 0 10 12"><path d="M0.5 0.5 L9.5 6 L0.5 11.5 Z" fill="#8a8a8a"/></svg>
<svg style="left:39.8px;top:1163.6px;" width="16.4" height="13.8" viewBox="0 0 18 15" preserveAspectRatio="none"><path d="M0.5 1.5 Q0.5 0.5 1.5 0.5 H6 L8 3 H16.5 Q17.5 3 17.5 4 V13.5 Q17.5 14.5 16.5 14.5 H1.5 Q0.5 14.5 0.5 13.5 Z" fill="#c4c4c4"/></svg>
<span class="t" style="left:61px;top:1160px;font-size:15.8px;color:#d2d2d2;letter-spacing:0px;">Resources</span>
<svg style="left:39.8px;top:1184px;" width="16.4" height="13.8" viewBox="0 0 18 15" preserveAspectRatio="none"><path d="M0.5 1.5 Q0.5 0.5 1.5 0.5 H6 L8 3 H16.5 Q17.5 3 17.5 4 V13.5 Q17.5 14.5 16.5 14.5 H1.5 Q0.5 14.5 0.5 13.5 Z" fill="#c4c4c4"/></svg>
<span class="t" style="left:61px;top:1181px;font-size:15.8px;color:#d2d2d2;letter-spacing:0.26px;">Scenes</span>
<svg style="left:23.4px;top:1205.2px;" width="10" height="12" viewBox="0 0 10 12"><path d="M0.5 0.5 L9.5 6 L0.5 11.5 Z" fill="#8a8a8a"/></svg>
<svg style="left:39.8px;top:1204.4px;" width="16.4" height="13.8" viewBox="0 0 18 15" preserveAspectRatio="none"><path d="M0.5 1.5 Q0.5 0.5 1.5 0.5 H6 L8 3 H16.5 Q17.5 3 17.5 4 V13.5 Q17.5 14.5 16.5 14.5 H1.5 Q0.5 14.5 0.5 13.5 Z" fill="#c4c4c4"/></svg>
<span class="t" style="left:61px;top:1201px;font-size:15.8px;color:#d2d2d2;letter-spacing:0.29px;">Scripts</span>
<div style="left:265px;top:1018.2px;width:1151px;height:26.2px;background:#3f3f3f;"></div>
<div style="left:265.6px;top:1043.8px;width:1150.4px;height:1.2px;background:#2c2c2c;"></div>
<span class="t" style="left:270.4px;top:1022px;font-size:15.8px;color:#c8c8c8;letter-spacing:0.24px;font-weight:bold;">Assets</span>
<div style="left:265px;top:1044.6px;width:1151px;height:145.8px;background:#333333;"></div>
<svg style="left:294.6px;top:1073.8px;" width="61.2" height="50.2" viewBox="0 0 61 50"><path d="M0 4 Q0 0 4 0 H23 Q26 0 27.5 2.5 L31 9 Q32 10.5 34 10.5 H57 Q61 10.5 61 14.5 V46 Q61 50 57 50 H4 Q0 50 0 46 Z" fill="#c2c2c2"/></svg>
<span class="t" style="left:307.7px;top:1141px;font-size:13.4px;color:#d2d2d2;letter-spacing:0px;">Editor</span>
<svg style="left:391.7px;top:1073.8px;" width="61.2" height="50.2" viewBox="0 0 61 50"><path d="M0 4 Q0 0 4 0 H23 Q26 0 27.5 2.5 L31 9 Q32 10.5 34 10.5 H57 Q61 10.5 61 14.5 V46 Q61 50 57 50 H4 Q0 50 0 46 Z" fill="#c2c2c2"/></svg>
<span class="t" style="left:390.3px;top:1141px;font-size:13.4px;color:#d2d2d2;letter-spacing:-0.01px;">Resources</span>
<svg style="left:488.8px;top:1073.8px;" width="61.2" height="50.2" viewBox="0 0 61 50"><path d="M0 4 Q0 0 4 0 H23 Q26 0 27.5 2.5 L31 9 Q32 10.5 34 10.5 H57 Q61 10.5 61 14.5 V46 Q61 50 57 50 H4 Q0 50 0 46 Z" fill="#c2c2c2"/></svg>
<span class="t" style="left:496.9px;top:1141px;font-size:13.4px;color:#d2d2d2;letter-spacing:0.06px;">Scenes</span>
<svg style="left:585.9px;top:1073.8px;" width="61.2" height="50.2" viewBox="0 0 61 50"><path d="M0 4 Q0 0 4 0 H23 Q26 0 27.5 2.5 L31 9 Q32 10.5 34 10.5 H57 Q61 10.5 61 14.5 V46 Q61 50 57 50 H4 Q0 50 0 46 Z" fill="#c2c2c2"/></svg>
<span class="t" style="left:595.25px;top:1141px;font-size:13.4px;color:#d2d2d2;letter-spacing:0.26px;">Scripts</span>
<div style="left:265px;top:1190.4px;width:1151px;height:26.6px;background:#3f3f3f;"></div>
<div style="left:265.6px;top:1190px;width:1150.4px;height:1px;background:#2c2c2c;"></div>
<div style="left:1325.2px;top:1202.2px;width:70.6px;height:1.6px;background:#5e5e5e;border-radius:1px;"></div>
<div style="left:1359.6px;top:1196.6px;width:12.8px;height:12.8px;background:#999;border-radius:50%;"></div>
<div style="left:0px;top:1216.8px;width:1855.6px;height:29.2px;background:#191919;"></div>
<svg style="left:3px;top:1222px;" width="17" height="17" viewBox="0 0 17 17"><circle cx="8.3" cy="8" r="8" fill="#e8e8e8"/><path d="M3 13 L2 17 L7 15 Z" fill="#e8e8e8"/><rect x="7.2" y="3" width="2.3" height="6.8" rx="1" fill="#222"/><circle cx="8.35" cy="12.3" r="1.3" fill="#222"/></svg>
<span class="t" style="left:25.3px;top:1221px;font-size:15.8px;color:#d2d2d2;letter-spacing:-1.09px;">NO_IAP</span>
<div style="left:1755.2px;top:1217.4px;width:1px;height:27.6px;background:#212121;"></div>
<div style="left:1788px;top:1217.4px;width:1px;height:27.6px;background:#212121;"></div>
<div style="left:1821.2px;top:1217.4px;width:1px;height:27.6px;background:#212121;"></div>
<svg style="left:1762.2px;top:1221.6px;" width="18.5" height="19.5" viewBox="0 0 18.5 19.5"><g fill="#f2c233"><ellipse cx="8" cy="11.2" rx="4.8" ry="6.4"/><ellipse cx="8.6" cy="4" rx="3.6" ry="3"/><path d="M1 3.5 L5.5 8 M0.8 11 H5 M1.6 18 L5 14.2 M15.6 2.6 L11.6 7.4 M11 10 H14.6 M5 1 L7 3.4 M12.6 0.8 L10.6 3.4" stroke="#f2c233" stroke-width="2.1" fill="none"/></g><rect x="11.4" y="8.6" width="3.4" height="6.6" fill="#f2c233" stroke="#191919" stroke-width="0.9"/><rect x="11.4" y="16" width="3.4" height="2.8" fill="#f2c233" stroke="#191919" stroke-width="0.7"/></svg>
<svg style="left:1796px;top:1222px;" width="19" height="19.5" viewBox="0 0 19 19.5"><g fill="#cacaca"><ellipse cx="9.2" cy="4" rx="7.8" ry="3.4"/><path d="M1.4 6.8 Q9.2 11.6 17 6.8 V9.8 Q9.2 14.6 1.4 9.8 Z"/><path d="M1.4 11.8 Q9.2 16.6 17 11.8 V15 Q9.2 19.8 1.4 15 Z"/></g><path d="M1 0.5 L18.5 19" stroke="#191919" stroke-width="3.2"/><path d="M1.6 1 L18.4 18.8" stroke="#cacaca" stroke-width="1.4"/></svg>
<svg style="left:1828.8px;top:1222.2px;" width="18.6" height="18.6" viewBox="0 0 18.6 18.6"><circle cx="9.3" cy="9.3" r="8.2" fill="none" stroke="#cacaca" stroke-width="1.6"/><path d="M5.4 9.6 L8.3 12.3 L13.2 6.6" fill="none" stroke="#cacaca" stroke-width="2"/></svg>
<div style="left:0;top:0;width:100%;height:100%;border-radius:13px;box-sizing:border-box;border:1.4px solid rgba(255,255,255,.2);border-top-color:rgba(255,255,255,.3)"></div>
</div>
</body></html>
